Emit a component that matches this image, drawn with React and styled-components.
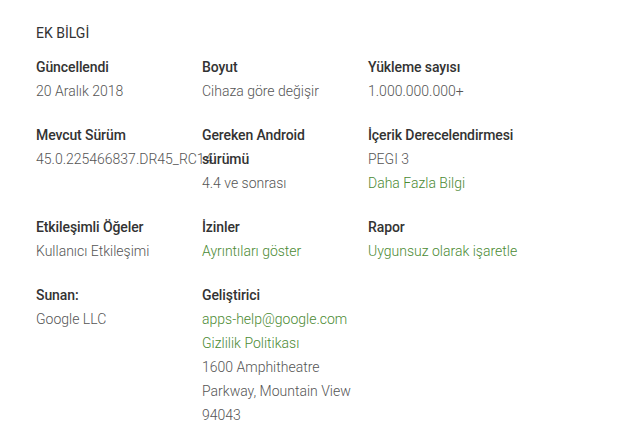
import React from 'react';
import styled, { createGlobalStyle } from 'styled-components';

const Global = createGlobalStyle`
  html, body {
    margin: 0;
    padding: 0;
    background: #fff;
  }
  body {
    font-family: Roboto, "Liberation Sans", Arial, sans-serif;
  }
`;

const Section = styled.section`
  padding: 21px 0 0 36px;
`;

const Title = styled.h2`
  margin: 0 0 10px;
  font-size: 14px;
  font-weight: 400;
  line-height: 24px;
  color: #333;
`;

const Grid = styled.div`
  display: grid;
  grid-template-columns: repeat(3, 166px);
  row-gap: 20px;
`;

const Item = styled.div`
  padding-right: 16px;
`;

const Label = styled.div`
  font-size: 14px;
  font-weight: 500;
  line-height: 24px;
  letter-spacing: -0.1px;
  color: #333;
`;

const Value = styled.div`
  font-size: 14px;
  font-weight: 300;
  line-height: 24px;
  color: ${p => (p.$link ? '#4b8a33' : '#555')};
  white-space: ${p => (p.$nowrap ? 'nowrap' : 'normal')};
`;

const items = [
  { label: 'Güncellendi', values: [{ text: '20 Aralık 2018' }] },
  { label: 'Boyut', values: [{ text: 'Cihaza göre değişir' }] },
  { label: 'Yükleme sayısı', values: [{ text: '1.000.000.000+' }] },
  { label: 'Mevcut Sürüm', values: [{ text: '45.0.225466837.DR45_RC14', nowrap: true }] },
  { label: 'Gereken Android sürümü', values: [{ text: '4.4 ve sonrası' }] },
  {
    label: 'İçerik Derecelendirmesi',
    values: [{ text: 'PEGI 3' }, { text: 'Daha Fazla Bilgi', link: true }],
  },
  { label: 'Etkileşimli Öğeler', values: [{ text: 'Kullanıcı Etkileşimi' }] },
  { label: 'İzinler', values: [{ text: 'Ayrıntıları göster', link: true }] },
  { label: 'Rapor', values: [{ text: 'Uygunsuz olarak işaretle', link: true }] },
  { label: 'Sunan:', values: [{ text: 'Google LLC' }] },
  {
    label: 'Geliştirici',
    values: [
      { text: 'apps-help@google.com', link: true },
      { text: 'Gizlilik Politikası', link: true },
      { text: '1600 Amphitheatre Parkway, Mountain View 94043' },
    ],
  },
];

export default function App() {
  return (
    <>
      <Global />
      <Section>
        <Title>EK BİLGİ</Title>
        <Grid>
          {items.map(item => (
            <Item key={item.label}>
              <Label>{item.label}</Label>
              {item.values.map(v => (
                <Value key={v.text} $link={v.link} $nowrap={v.nowrap}>
                  {v.text}
                </Value>
              ))}
            </Item>
          ))}
        </Grid>
      </Section>
    </>
  );
}
